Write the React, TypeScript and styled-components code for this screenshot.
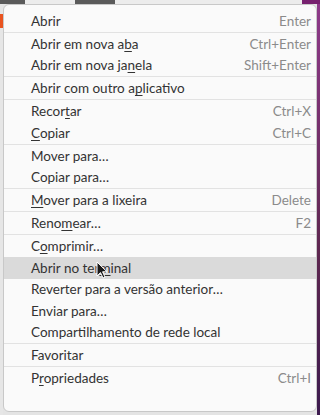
import React from "react";
import styled, { createGlobalStyle } from "styled-components";

const GlobalStyle = createGlobalStyle`
  html, body {
    margin: 0;
    padding: 0;
    background: #e9e9e9;
  }
`;

interface IMenuItem {
  label: string;
  mnemonic?: number;
  accel?: string;
  separatorAfter?: boolean;
  hover?: boolean;
}

const items: IMenuItem[] = [
  { label: "Abrir", accel: "Enter", separatorAfter: true },
  { label: "Abrir em nova aba", mnemonic: 15, accel: "Ctrl+Enter" },
  { label: "Abrir em nova janela", mnemonic: 16, accel: "Shift+Enter", separatorAfter: true },
  { label: "Abrir com outro aplicativo", mnemonic: 17, separatorAfter: true },
  { label: "Recortar", mnemonic: 5, accel: "Ctrl+X" },
  { label: "Copiar", mnemonic: 0, accel: "Ctrl+C", separatorAfter: true },
  { label: "Mover para…" },
  { label: "Copiar para…", separatorAfter: true },
  { label: "Mover para a lixeira", mnemonic: 0, accel: "Delete", separatorAfter: true },
  { label: "Renomear…", mnemonic: 4, accel: "F2", separatorAfter: true },
  { label: "Comprimir…", mnemonic: 1 },
  { label: "Abrir no terminal", mnemonic: 12, hover: true },
  { label: "Reverter para a versão anterior…" },
  { label: "Enviar para…" },
  { label: "Compartilhamento de rede local", separatorAfter: true },
  { label: "Favoritar", separatorAfter: true },
  { label: "Propriedades", mnemonic: 1, accel: "Ctrl+I" },
];

const Label: React.FC<{ text: string; mnemonic?: number }> = ({ text, mnemonic }) => {
  if (mnemonic === undefined) return <span>{text}</span>;
  return (
    <span>
      {text.slice(0, mnemonic)}
      <Mnemonic>{text[mnemonic]}</Mnemonic>
      {text.slice(mnemonic + 1)}
    </span>
  );
};

const Cursor = () => (
  <CursorWrap>
    <svg width="12" height="18" viewBox="0 0 12 18">
      <path
        d="M1 1 L1 15 L4.5 11.6 L7 17 L9 16.1 L6.6 10.8 L11 10.8 Z"
        fill="#1a1a1a"
        stroke="#ffffff"
        strokeWidth="1"
        strokeLinejoin="round"
      />
    </svg>
  </CursorWrap>
);

const App: React.FC = () => {
  return (
    <Desktop>
      <GlobalStyle />
      <TopBar>
        <Tab dark width={25} />
        <Tab width={50} />
        <Tab dark width={40} />
        <Tab width={187} />
        <Tab purple width={18} />
      </TopBar>
      <Middle>
        <LeftEdge>
          <OrangeMark />
        </LeftEdge>
        <Menu>
          {items.map((item) => (
            <React.Fragment key={item.label}>
              <Row hover={item.hover}>
                <Label text={item.label} mnemonic={item.mnemonic} />
                {item.accel && <Accel>{item.accel}</Accel>}
                {item.hover && <Cursor />}
              </Row>
              {item.separatorAfter && <Separator />}
            </React.Fragment>
          ))}
        </Menu>
        <RightEdge />
      </Middle>
    </Desktop>
  );
};

export default App;

const Desktop = styled.div`
  width: 320px;
  height: 415px;
  overflow: hidden;
  display: flex;
  flex-direction: column;
  background: #e4e4e4;
`;

const TopBar = styled.div`
  display: flex;
  height: 4px;
  flex-shrink: 0;
`;

const Tab = styled.div<{ width: number; dark?: boolean; purple?: boolean }>`
  width: ${(p) => p.width}px;
  flex-shrink: 0;
  background: ${(p) => (p.purple ? "#77216f" : p.dark ? "#5a5a5a" : "#ececec")};
  &:last-child {
    flex: 1;
  }
`;

const Middle = styled.div`
  display: flex;
  flex: 1;
`;

const LeftEdge = styled.div`
  width: 3px;
  flex-shrink: 0;
  background: #e6e6e6;
  padding-top: 10px;
`;

const OrangeMark = styled.div`
  width: 3px;
  height: 14px;
  background: #e95420;
`;

const RightEdge = styled.div`
  flex: 1;
  background: linear-gradient(to bottom, #8e3a8a, #5e2750 60%, #3c1a4e);
`;

const Menu = styled.div`
  width: 314px;
  height: 408px;
  box-sizing: border-box;
  flex-shrink: 0;
  background: #fafafa;
  border: 1px solid #c8c8c8;
  border-radius: 6px;
  padding: 5px 0 0;
  font-family: Lato, "Noto Sans", sans-serif;
  font-size: 13.5px;
  color: #333333;
`;

const Row = styled.div<{ hover?: boolean }>`
  position: relative;
  height: 21.5px;
  display: flex;
  align-items: center;
  justify-content: space-between;
  padding: 0 5px 0 27px;
  background: ${(p) => (p.hover ? "#dadada" : "transparent")};
  white-space: nowrap;
`;

const Mnemonic = styled.span`
  text-decoration: underline;
  text-decoration-thickness: 1px;
  text-underline-offset: 2px;
`;

const Accel = styled.span`
  color: #8b8b8b;
`;

const Separator = styled.div`
  height: 1px;
  margin: 0 0 0.5px;
  background: #e2e2e2;
`;

const CursorWrap = styled.div`
  position: absolute;
  left: 92px;
  top: 4px;
  line-height: 0;
`;
